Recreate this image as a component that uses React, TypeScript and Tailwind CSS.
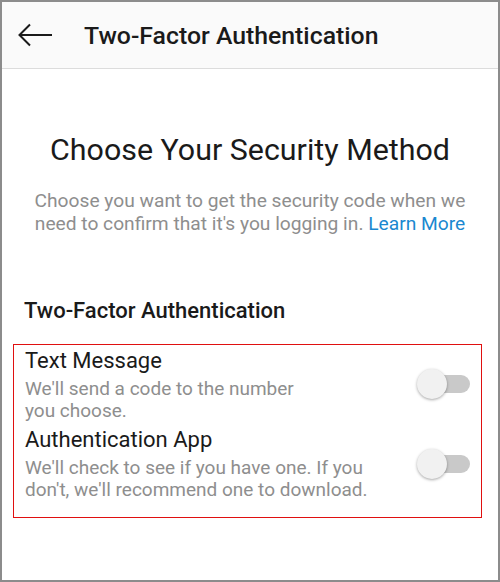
import React from 'react'

const Toggle = () => (
  <div className="relative w-[53px] h-[30px] shrink-0">
    <div className="absolute left-[14px] right-0 top-[6px] h-[18px] rounded-full bg-[#c9c9c9]" />
    <div className="absolute left-0 top-0 w-[30px] h-[30px] rounded-full bg-[#f1f1f1] shadow-[0_1px_3px_rgba(0,0,0,0.35)]" />
  </div>
)

const App = () => {
  return (
    <div className="w-[500px] h-[582px] border-2 border-[#8c8c8c] bg-white font-['Roboto',sans-serif] overflow-hidden">
      <div className="h-[67px] bg-[#fafafa] border-b border-[#dcdcdc] flex items-center">
        <svg className="ml-[16px]" width="36" height="24" viewBox="0 0 36 24" fill="none" stroke="#1a1a1a" strokeWidth="2">
          <path d="M1.5 12H34" />
          <path d="M12 1.5L1.5 12L12 22.5" />
        </svg>
        <h1 className="ml-[30px] mt-[2px] text-[24.8px] font-medium text-[#1a1a1a]">Two-Factor Authentication</h1>
      </div>

      <h2 className="mt-[63px] text-center text-[30.4px] text-[#1a1a1a] leading-[36px]">Choose Your Security Method</h2>
      <p className="mt-[21px] text-center text-[19.2px] leading-[23px] text-[#8e8e8e]">
        Choose you want to get the security code when we
        <br />
        need to confirm that it's you logging in. <span className="text-[#1a88d0]">Learn More</span>
      </p>

      <h3 className="mt-[62px] ml-[22px] text-[22px] leading-[28px] font-medium text-[#1a1a1a]">Two-Factor Authentication</h3>

      <div className="mt-[19px] ml-[11px] mr-[16px] border border-[#e01010] pl-[11px] pr-[11px] pt-[1px] pb-[16px]">
        <div className="flex items-center justify-between">
          <div>
            <div className="text-[22px] leading-[30px] text-[#1a1a1a]">Text Message</div>
            <div className="mt-[2px] text-[19px] leading-[22px] text-[#8e8e8e]">We'll send a code to the number<br />you choose.</div>
          </div>
          <Toggle />
        </div>
        <div className="mt-[5px] flex items-center justify-between">
          <div>
            <div className="text-[22px] leading-[26px] text-[#1a1a1a]">Authentication App</div>
            <div className="mt-[4px] text-[19px] leading-[22px] text-[#8e8e8e]">We'll check to see if you have one. If you<br />don't, we'll recommend one to download.</div>
          </div>
          <Toggle />
        </div>
      </div>
    </div>
  )
}

export default App
